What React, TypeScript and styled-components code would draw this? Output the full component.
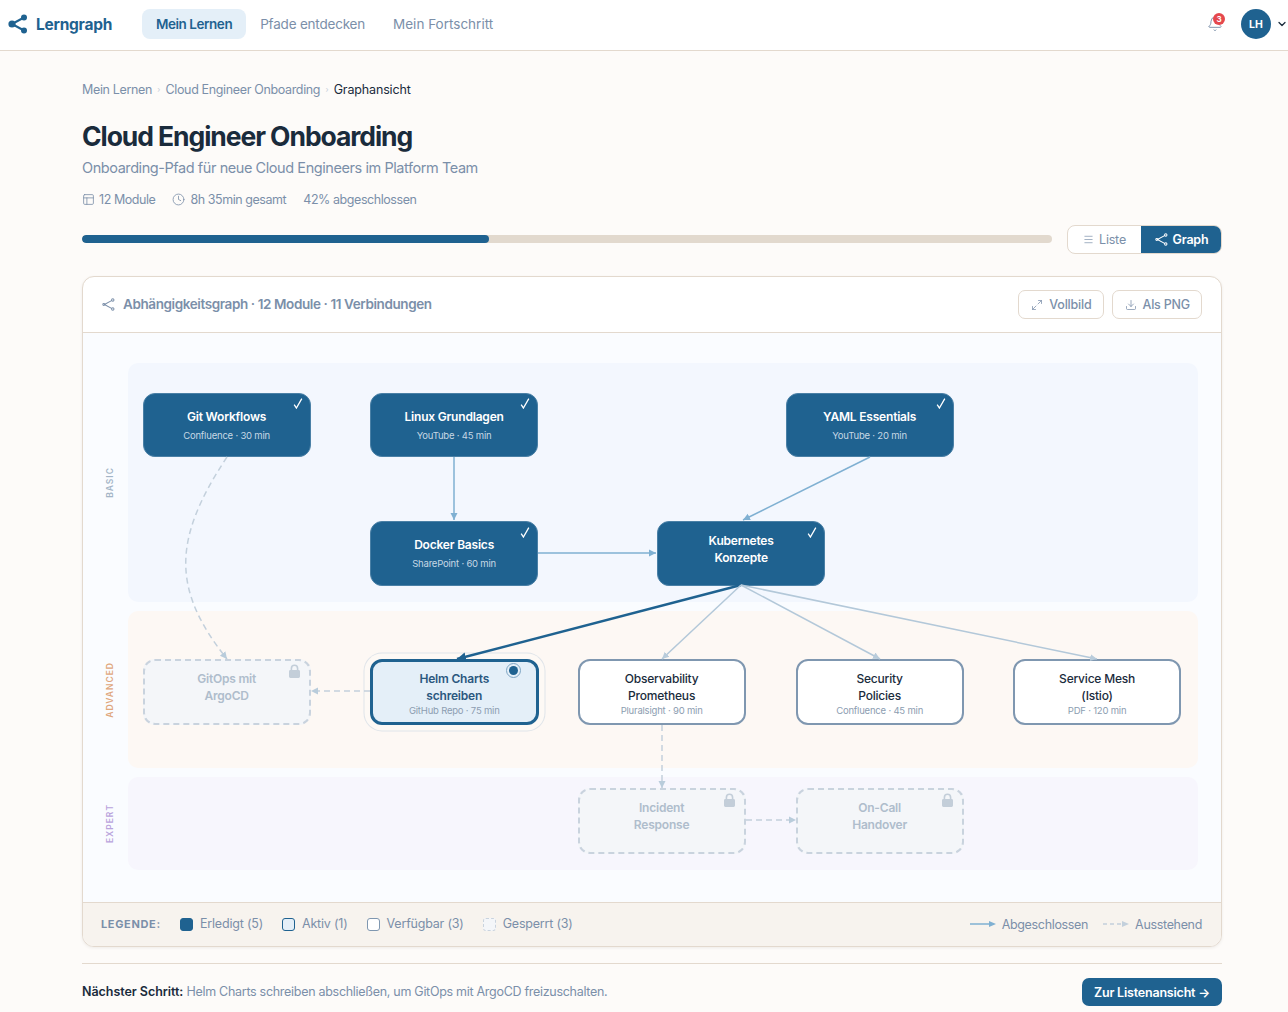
import React from 'react'
import styled, { createGlobalStyle, css } from 'styled-components'
import { Bell, ChevronDown, Clock, Download, Maximize2, Menu, PanelsTopLeft } from 'lucide-react'

const primary = '#1f6290'
const muted = '#7b8fa9'
const ink = '#1a2b3c'
const line = '#e3d9ce'

const GlobalStyle = createGlobalStyle`
    html, body {
        margin: 0;
        height: 1012px;
        overflow: hidden;
        background: #fdfbf9;
        font-family: Inter, "Liberation Sans", sans-serif;
        color: ${ink};
    }
`

const NavBar = styled.header`
    height: 51px;
    box-sizing: border-box;
    display: flex;
    align-items: center;
    background: #fff;
    border-bottom: 1px solid ${line};
    padding: 0 0 2px 8px;
`

const Logo = styled.div`
    display: flex;
    align-items: center;
    gap: 8px;
    width: 134px;
    font-size: 15.5px;
    font-weight: 700;
    letter-spacing: -0.25px;
    color: ${primary};
`

const NavLink = styled.a<{ $active?: boolean }>`
    height: 30px;
    display: flex;
    align-items: center;
    padding: 0 14px;
    border-radius: 8px;
    font-size: 13.5px;
    letter-spacing: -0.2px;
    color: ${muted};
    &:last-of-type {
        letter-spacing: 0;
    }
    ${({ $active }) =>
        $active &&
        css`
            background: #e4eff8;
            color: ${primary};
            font-weight: 600;
            letter-spacing: -0.46px;
        `}
`

const NavRight = styled.div`
    margin-left: auto;
    display: flex;
    align-items: center;
`

const BellWrap = styled.div`
    position: relative;
    width: 16px;
    height: 16px;
    margin-right: 18px;
    color: ${muted};
`

const Badge = styled.span`
    position: absolute;
    top: -3px;
    right: -2px;
    width: 12px;
    height: 12px;
    border-radius: 50%;
    background: #e5484d;
    color: #fff;
    font-size: 8px;
    font-weight: 700;
    line-height: 12px;
    text-align: center;
`

const Avatar = styled.div`
    width: 30px;
    height: 30px;
    border-radius: 50%;
    background: ${primary};
    color: #fff;
    font-size: 10.5px;
    font-weight: 700;
    display: flex;
    align-items: center;
    justify-content: center;
    margin-right: 5px;
`

const Main = styled.main`
    width: 1140px;
    margin-left: 82px;
    padding-top: 30px;
`

const Crumbs = styled.nav`
    display: flex;
    align-items: center;
    height: 16px;
    font-size: 12.5px;
    letter-spacing: -0.35px;
    color: ${muted};
`

const CrumbSep = styled.span`
    width: 13.5px;
    text-align: center;
    font-size: 8px;
    color: #c6cfd9;
`

const CrumbNow = styled.span`
    color: ${ink};
    letter-spacing: -0.15px;
`

const Title = styled.h1`
    margin: 22px 0 0;
    font-size: 26.5px;
    line-height: 34px;
    font-weight: 700;
    letter-spacing: -1.07px;
    color: ${ink};
`

const Subtitle = styled.p`
    margin: 5px 0 0;
    font-size: 14.5px;
    line-height: 20px;
    letter-spacing: -0.43px;
    color: ${muted};
`

const Meta = styled.div`
    display: flex;
    align-items: center;
    gap: 17px;
    margin-top: 13px;
    height: 16px;
    font-size: 12.5px;
    letter-spacing: -0.44px;
    color: ${muted};
`

const MetaItem = styled.span`
    display: flex;
    align-items: center;
    gap: 4px;
    &:nth-child(2) {
        gap: 5px;
    }
`

const ProgressRow = styled.div`
    display: flex;
    align-items: flex-start;
    gap: 15px;
    margin-top: 18px;
`

const Track = styled.div`
    flex: 1;
    height: 8px;
    margin-top: 10px;
    border-radius: 4px;
    background: #e2d9ce;
    overflow: hidden;
`

const Fill = styled.div`
    height: 100%;
    border-radius: 4px;
    background: ${primary};
`

const Toggle = styled.div`
    display: flex;
    width: 155px;
    height: 29px;
    box-sizing: border-box;
    border: 1px solid ${line};
    border-radius: 8px;
    overflow: hidden;
    background: #fff;
`

const ToggleItem = styled.div<{ $active?: boolean }>`
    display: flex;
    align-items: center;
    justify-content: center;
    gap: 5px;
    flex: 0 0 ${({ $active }) => ($active ? '81px' : '73px')};
    font-size: 12.5px;
    letter-spacing: -0.2px;
    font-weight: ${({ $active }) => ($active ? 600 : 400)};
    color: ${({ $active }) => ($active ? '#fff' : muted)};
    background: ${({ $active }) => ($active ? primary : 'transparent')};
`

const Panel = styled.section`
    margin-top: 22px;
    background: #fff;
    border: 1px solid ${line};
    border-radius: 12px;
    overflow: hidden;
    box-shadow: 0 1px 3px rgba(60, 50, 40, 0.08);
`

const PanelHead = styled.div`
    height: 55px;
    display: flex;
    align-items: center;
    padding: 0 19px;
    border-bottom: 1px solid ${line};
`

const PanelTitle = styled.div`
    display: flex;
    align-items: center;
    gap: 8px;
    padding-bottom: 1px;
    font-size: 13.5px;
    font-weight: 600;
    letter-spacing: -0.4px;
    color: ${muted};
`

const PanelActions = styled.div`
    margin-left: auto;
    display: flex;
    gap: 8px;
`

const GhostButton = styled.button`
    height: 29px;
    display: flex;
    align-items: center;
    gap: 6px;
    padding: 0 11px 0 12px;
    background: #fff;
    border: 1px solid ${line};
    border-radius: 7px;
    font: 500 12.5px Inter, sans-serif;
    letter-spacing: -0.2px;
    color: ${muted};
`

const Canvas = styled.div`
    position: relative;
    display: flex;
    flex-direction: column;
    gap: 9px;
    height: 569px;
    box-sizing: border-box;
    padding: 30px 23px 0 0;
    background: #fafcff;
`

const Lane = styled.div<{ $h: number }>`
    display: flex;
    height: ${({ $h }) => $h}px;
`

const LaneLabelCell = styled.div`
    width: 45px;
    display: flex;
    align-items: center;
    justify-content: center;
    padding-left: 8px;
    box-sizing: border-box;
`

const LaneLabel = styled.span<{ $color: string }>`
    writing-mode: vertical-rl;
    transform: rotate(180deg);
    font-size: 8.5px;
    font-weight: 600;
    letter-spacing: 1px;
    color: ${({ $color }) => $color};
`

const LaneBand = styled.div<{ $bg: string }>`
    flex: 1;
    border-radius: 10px;
    background: ${({ $bg }) => $bg};
`

const Edges = styled.svg`
    position: absolute;
    inset: 0;
    width: 100%;
    height: 100%;
    pointer-events: none;
`

type NodeKind = 'done' | 'active' | 'open' | 'locked'

const nodeKinds = {
    done: css`
        height: 64.5px;
        background: ${primary};
        border: 1px solid #4a80a6;
        color: #fff;
    `,
    active: css`
        width: 169.5px;
        height: 66.5px;
        background: #e4eff8;
        border: 3px solid ${primary};
        color: #2b587f;
        box-shadow: 0 0 0 5.5px #fdf9f5, 0 0 0 6.5px #dfe4e9;
    `,
    open: css`
        height: 66.5px;
        background: #fff;
        border: 2px solid #7f97b0;
        color: ${ink};
    `,
    locked: css`
        height: 66.5px;
        background: #f4f6f9;
        border: 2px dashed #c9d3de;
        color: #afbdcc;
    `,
}

const NodeBox = styled.div<{ $kind: NodeKind; $x: number; $y: number; $top: number; $bottom: number }>`
    position: absolute;
    left: ${({ $x }) => $x}px;
    top: ${({ $y }) => $y}px;
    width: 168.2px;
    box-sizing: border-box;
    border-radius: 12px;
    display: flex;
    flex-direction: column;
    align-items: center;
    justify-content: center;
    padding: ${({ $top }) => $top}px 0 ${({ $bottom }) => $bottom}px;
    text-align: center;
    ${({ $kind }) => nodeKinds[$kind]}
`

const NodeTitle = styled.div<{ $kind: NodeKind }>`
    font-size: 12px;
    line-height: 17px;
    font-weight: ${({ $kind }) => ($kind === 'open' ? 500 : 600)};
    letter-spacing: -0.2px;
    white-space: pre-line;
`

const NodeSub = styled.div<{ $kind: NodeKind; $gap: number }>`
    margin-top: ${({ $gap }) => $gap}px;
    font-size: 9.5px;
    line-height: 13px;
    letter-spacing: -0.2px;
    color: ${({ $kind }) => ($kind === 'done' ? '#c6d8e5' : '#8c9db1')};
`

const NodeCheck = styled.svg`
    position: absolute;
    top: 4.5px;
    right: 7px;
    width: 10px;
    height: 11px;
    fill: none;
    stroke: #fff;
    stroke-width: 1.3;
`

const NodeLock = styled.svg`
    position: absolute;
    top: 3px;
    right: 9px;
    width: 11px;
    height: 14px;
    fill: #c3ced9;
`

const NodeRadio = styled.span`
    position: absolute;
    top: 1px;
    right: 15px;
    width: 15px;
    height: 15px;
    box-sizing: border-box;
    border: 1px solid #7fa6c4;
    border-radius: 50%;
    background: #e4eff8;
    &::after {
        content: '';
        position: absolute;
        inset: 2px;
        border-radius: 50%;
        background: ${primary};
    }
`

const LegendBar = styled.div`
    height: 43px;
    box-sizing: content-box;
    display: flex;
    align-items: center;
    padding: 0 19px;
    background: #f7f3ee;
    border-top: 1px solid ${line};
    font-size: 12.5px;
    letter-spacing: -0.2px;
    color: ${muted};
`

const LegendHead = styled.span`
    width: 78px;
    margin-left: -1px;
    margin-right: 1px;
    padding-bottom: 1px;
    font-size: 11px;
    font-weight: 700;
    letter-spacing: 0.65px;
`

const LegendItem = styled.span`
    display: flex;
    align-items: center;
    gap: 7px;
    margin-right: 19px;
    line-height: 14px;
    padding-bottom: 1px;
`

const swatches = {
    done: css`
        background: ${primary};
        border: 1px solid ${primary};
    `,
    active: css`
        background: #e4eff8;
        border: 1.5px solid ${primary};
    `,
    open: css`
        background: #fff;
        border: 1.5px solid #7f97b0;
    `,
    locked: css`
        background: #f4f6f9;
        border: 1px dashed #c9d3de;
    `,
}

const Swatch = styled.i<{ $kind: NodeKind }>`
    width: 13px;
    height: 13px;
    box-sizing: border-box;
    border-radius: 3px;
    ${({ $kind }) => swatches[$kind]}
`

const LegendEdges = styled.div`
    margin-left: auto;
    display: flex;
    gap: 15px;
    letter-spacing: -0.33px;
`

const LegendEdge = styled.span`
    display: flex;
    align-items: center;
    gap: 6px;
    padding-bottom: 1px;
`

const Footer = styled.footer`
    margin-top: 16px;
    padding-top: 14px;
    border-top: 1px solid ${line};
    display: flex;
    align-items: center;
    justify-content: space-between;
    font-size: 12.5px;
    letter-spacing: -0.29px;
    color: ${muted};
`

const FooterText = styled.span`
    padding-bottom: 2px;
`

const FooterStrong = styled.strong`
    color: ${ink};
    font-weight: 600;
    letter-spacing: -0.05px;
`

const PrimaryButton = styled.button`
    width: 140px;
    height: 28px;
    border: 0;
    border-radius: 7px;
    background: ${primary};
    color: #fff;
    font: 600 12.5px Inter, sans-serif;
    letter-spacing: -0.2px;
`

const OX = 83
const OY = 333

type GraphNode = { title: string; sub?: string; kind: NodeKind; x: number; y: number; mark?: 'check' | 'lock' | 'radio' }

const nodes: GraphNode[] = [
    { title: 'Git Workflows', sub: 'Confluence · 30 min', kind: 'done', x: 142.5, y: 392.5, mark: 'check' },
    { title: 'Linux Grundlagen', sub: 'YouTube · 45 min', kind: 'done', x: 370, y: 392.5, mark: 'check' },
    { title: 'YAML Essentials', sub: 'YouTube · 20 min', kind: 'done', x: 785.5, y: 392.5, mark: 'check' },
    { title: 'Docker Basics', sub: 'SharePoint · 60 min', kind: 'done', x: 370, y: 521, mark: 'check' },
    { title: 'Kubernetes\nKonzepte', kind: 'done', x: 657, y: 521, mark: 'check' },
    { title: 'GitOps mit\nArgoCD', kind: 'locked', x: 142.5, y: 658.5, mark: 'lock' },
    { title: 'Helm Charts\nschreiben', sub: 'GitHub Repo · 75 min', kind: 'active', x: 369.5, y: 658.5, mark: 'radio' },
    { title: 'Observability\nPrometheus', sub: 'Pluralsight · 90 min', kind: 'open', x: 577.5, y: 658.5 },
    { title: 'Security\nPolicies', sub: 'Confluence · 45 min', kind: 'open', x: 795.5, y: 658.5 },
    { title: 'Service Mesh\n(Istio)', sub: 'PDF · 120 min', kind: 'open', x: 1013, y: 658.5 },
    { title: 'Incident\nResponse', kind: 'locked', x: 577.5, y: 787.5, mark: 'lock' },
    { title: 'On-Call\nHandover', kind: 'locked', x: 795.5, y: 787.5, mark: 'lock' },
]

const edges = [
    { d: 'M454 457L454 520', c: 'done' },
    { d: 'M870 457L743 520', c: 'done' },
    { d: 'M538 553L656 553', c: 'done' },
    { d: 'M741 585L457 659', c: 'now' },
    { d: 'M741 585L662 659', c: 'open' },
    { d: 'M741 585L880 659', c: 'open' },
    { d: 'M741 585L1097 659', c: 'open' },
    { d: 'M227 457C172 540 172 590 227 659', c: 'lock' },
    { d: 'M370 691L311 691', c: 'lock' },
    { d: 'M662 725L662 788', c: 'lock' },
    { d: 'M746 820L796 820', c: 'lock' },
]

const edgeStyle: Record<string, { stroke: string; width: number; dash?: string; marker: string }> = {
    done: { stroke: '#7fb0d2', width: 1.5, marker: 'url(#a-done)' },
    now: { stroke: primary, width: 2.5, marker: 'url(#a-now)' },
    open: { stroke: '#b3c8d9', width: 1.5, marker: 'url(#a-open)' },
    lock: { stroke: '#c3d0dc', width: 1.5, dash: '6 4', marker: 'url(#a-open)' },
}

function ArrowMarker({ id, color, size = 7 }: { id: string; color: string; size?: number }) {
    return (
        <marker id={id} markerUnits="userSpaceOnUse" markerWidth={size + 2} markerHeight={size + 2} refX={size} refY={size / 2 + 1} orient="auto">
            <path d={`M0 1L${size} ${size / 2 + 1}L0 ${size + 1}Z`} fill={color} />
        </marker>
    )
}

function LockGlyph() {
    return (
        <NodeLock viewBox="0 0 11 14">
            <path d="M5.5 0.5A3.9 3.9 0 0 0 1.6 4.4V6H1.4A1.4 1.4 0 0 0 0 7.4V12.6A1.4 1.4 0 0 0 1.4 14H9.6A1.4 1.4 0 0 0 11 12.6V7.4A1.4 1.4 0 0 0 9.6 6H9.4V4.4A3.9 3.9 0 0 0 5.5 0.5ZM3.2 6V4.4A2.3 2.3 0 0 1 7.8 4.4V6Z" />
        </NodeLock>
    )
}

function LogoGlyph() {
    return (
        <svg width="20" height="20" viewBox="0 0 20 20">
            <g stroke={primary} strokeWidth="2">
                <path d="M4 10L16 3.5M4 10L16 16.5" />
            </g>
            <circle cx="4" cy="10" r="3.6" fill={primary} />
            <circle cx="16" cy="3.5" r="3" fill={primary} />
            <circle cx="16" cy="16.5" r="3" fill={primary} />
        </svg>
    )
}

function GraphGlyph({ size = 13 }: { size?: number }) {
    return (
        <svg width={size} height={size} viewBox="0 0 14 14" fill="none" stroke="currentColor" strokeWidth="1.1">
            <path d="M2.6 7L10.8 2.6M2.6 7L10.8 11.4" />
            <circle cx="1.9" cy="7" r="1" />
            <circle cx="11.6" cy="2.2" r="1.3" />
            <circle cx="11.6" cy="11.8" r="1.3" />
        </svg>
    )
}

function Node({ node }: { node: GraphNode }) {
    const twoLines = node.title.includes('\n')
    let top = 0
    if (node.sub && twoLines) top = 3
    const bottom = node.sub ? 0 : 9
    return (
        <NodeBox $kind={node.kind} $x={node.x - OX} $y={node.y - OY} $top={top} $bottom={bottom}>
            <NodeTitle $kind={node.kind}>{node.title}</NodeTitle>
            {node.sub && (
                <NodeSub $kind={node.kind} $gap={twoLines ? 0 : 4}>
                    {node.sub}
                </NodeSub>
            )}
            {node.mark === 'check' && (
                <NodeCheck viewBox="0 0 10 11">
                    <path d="M1.2 6.6L3.4 10L8.8 0.6" />
                </NodeCheck>
            )}
            {node.mark === 'lock' && <LockGlyph />}
            {node.mark === 'radio' && <NodeRadio />}
        </NodeBox>
    )
}

export default function App() {
    return (
        <>
            <GlobalStyle />
            <NavBar>
                <Logo>
                    <LogoGlyph />
                    Lerngraph
                </Logo>
                <NavLink $active>Mein Lernen</NavLink>
                <NavLink>Pfade entdecken</NavLink>
                <NavLink>Mein Fortschritt</NavLink>
                <NavRight>
                    <BellWrap>
                        <Bell size={16} strokeWidth={1.4} />
                        <Badge>3</Badge>
                    </BellWrap>
                    <Avatar>LH</Avatar>
                    <ChevronDown size={12} strokeWidth={2.5} color={ink} />
                </NavRight>
            </NavBar>
            <Main>
                <Crumbs>
                    Mein Lernen
                    <CrumbSep>›</CrumbSep>
                    Cloud Engineer Onboarding
                    <CrumbSep>›</CrumbSep>
                    <CrumbNow>Graphansicht</CrumbNow>
                </Crumbs>
                <Title>Cloud Engineer Onboarding</Title>
                <Subtitle>Onboarding-Pfad für neue Cloud Engineers im Platform Team</Subtitle>
                <Meta>
                    <MetaItem>
                        <PanelsTopLeft size={13} strokeWidth={1.5} />
                        12 Module
                    </MetaItem>
                    <MetaItem>
                        <Clock size={13} strokeWidth={1.5} />
                        8h 35min gesamt
                    </MetaItem>
                    <MetaItem>42% abgeschlossen</MetaItem>
                </Meta>
                <ProgressRow>
                    <Track>
                        <Fill style={{ width: '42%' }} />
                    </Track>
                    <Toggle>
                        <ToggleItem>
                            <Menu size={11} strokeWidth={1.5} />
                            Liste
                        </ToggleItem>
                        <ToggleItem $active>
                            <GraphGlyph />
                            Graph
                        </ToggleItem>
                    </Toggle>
                </ProgressRow>
                <Panel>
                    <PanelHead>
                        <PanelTitle>
                            <GraphGlyph />
                            Abhängigkeitsgraph · 12 Module · 11 Verbindungen
                        </PanelTitle>
                        <PanelActions>
                            <GhostButton>
                                <Maximize2 size={12} strokeWidth={1.5} />
                                Vollbild
                            </GhostButton>
                            <GhostButton>
                                <Download size={12} strokeWidth={1.5} />
                                Als PNG
                            </GhostButton>
                        </PanelActions>
                    </PanelHead>
                    <Canvas>
                        <Lane $h={239}>
                            <LaneLabelCell>
                                <LaneLabel $color="#a3b4c6">BASIC</LaneLabel>
                            </LaneLabelCell>
                            <LaneBand $bg="#f3f7fe" />
                        </Lane>
                        <Lane $h={157}>
                            <LaneLabelCell>
                                <LaneLabel $color="#dfa67c">ADVANCED</LaneLabel>
                            </LaneLabelCell>
                            <LaneBand $bg="#fdf8f4" />
                        </Lane>
                        <Lane $h={93}>
                            <LaneLabelCell>
                                <LaneLabel $color="#b9a3dc">EXPERT</LaneLabel>
                            </LaneLabelCell>
                            <LaneBand $bg="#f7f6fd" />
                        </Lane>
                        {nodes.map(node => (
                            <Node key={node.title} node={node} />
                        ))}
                        <Edges viewBox={`${OX} ${OY} 1138 569`}>
                            <defs>
                                <ArrowMarker id="a-done" color="#7fb0d2" />
                                <ArrowMarker id="a-now" color={primary} size={9} />
                                <ArrowMarker id="a-open" color="#b9ccdb" />
                            </defs>
                            {edges.map(edge => {
                                const s = edgeStyle[edge.c]
                                return (
                                    <path
                                        key={edge.d}
                                        d={edge.d}
                                        fill="none"
                                        stroke={s.stroke}
                                        strokeWidth={s.width}
                                        strokeDasharray={s.dash}
                                        markerEnd={s.marker}
                                    />
                                )
                            })}
                        </Edges>
                    </Canvas>
                    <LegendBar>
                        <LegendHead>LEGENDE:</LegendHead>
                        <LegendItem>
                            <Swatch $kind="done" />
                            Erledigt (5)
                        </LegendItem>
                        <LegendItem>
                            <Swatch $kind="active" />
                            Aktiv (1)
                        </LegendItem>
                        <LegendItem>
                            <Swatch $kind="open" />
                            Verfügbar (3)
                        </LegendItem>
                        <LegendItem>
                            <Swatch $kind="locked" />
                            Gesperrt (3)
                        </LegendItem>
                        <LegendEdges>
                            <LegendEdge>
                                <svg width="26" height="8" viewBox="0 0 26 8">
                                    <path d="M0 4H20" stroke="#7fb0d2" strokeWidth="1.5" />
                                    <path d="M19 1L26 4L19 7Z" fill="#7fb0d2" />
                                </svg>
                                Abgeschlossen
                            </LegendEdge>
                            <LegendEdge>
                                <svg width="26" height="8" viewBox="0 0 26 8">
                                    <path d="M0 4H20" stroke="#c3d0dc" strokeWidth="1.5" strokeDasharray="4 3" />
                                    <path d="M19 1L26 4L19 7Z" fill="#c3d0dc" />
                                </svg>
                                Ausstehend
                            </LegendEdge>
                        </LegendEdges>
                    </LegendBar>
                </Panel>
                <Footer>
                    <FooterText>
                        <FooterStrong>Nächster Schritt:</FooterStrong> Helm Charts schreiben abschließen, um GitOps mit ArgoCD freizuschalten.
                    </FooterText>
                    <PrimaryButton>Zur Listenansicht →</PrimaryButton>
                </Footer>
            </Main>
        </>
    )
}
